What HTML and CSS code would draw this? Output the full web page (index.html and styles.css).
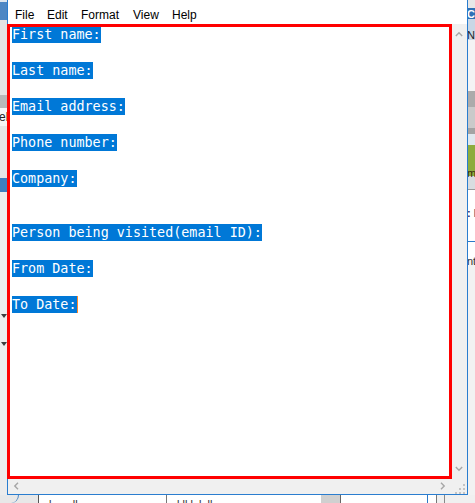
FILE: index.html
```
<!DOCTYPE html>
<html>
<head>
<meta charset="utf-8">
<link rel="stylesheet" href="styles.css">
</head>
<body>
<div class="desktop">
  <div class="strip-left">
    <div class="frag-el">el</div>
    <div class="tri tri-1"></div>
    <div class="tri tri-2"></div>
  </div>

  <div class="notepad">
    <div class="menubar">
      <span class="menu m-file">File</span>
      <span class="menu m-edit">Edit</span>
      <span class="menu m-format">Format</span>
      <span class="menu m-view">View</span>
      <span class="menu m-help">Help</span>
    </div>
    <div class="main">
      <div class="editor">
        <div class="line"><span class="sel">First name:</span></div>
        <div class="line"></div>
        <div class="line"><span class="sel">Last name:</span></div>
        <div class="line"></div>
        <div class="line"><span class="sel">Email address:</span></div>
        <div class="line"></div>
        <div class="line"><span class="sel">Phone number:</span></div>
        <div class="line"></div>
        <div class="line"><span class="sel">Company:</span></div>
        <div class="line"></div>
        <div class="line"></div>
        <div class="line"><span class="sel">Person being visited(email ID):</span></div>
        <div class="line"></div>
        <div class="line"><span class="sel">From Date:</span></div>
        <div class="line"></div>
        <div class="line"><span class="sel">To Date:</span><span class="caret"></span></div>
      </div>
      <div class="vscroll">
        <svg class="chev" width="8" height="6" viewBox="0 0 8 6"><polyline points="0.8,5 4,1.8 7.2,5" fill="none" stroke="#a6a6a6" stroke-width="1.4"/></svg>
        <svg class="chev" width="8" height="6" viewBox="0 0 8 6"><polyline points="0.8,1 4,4.2 7.2,1" fill="none" stroke="#a6a6a6" stroke-width="1.4"/></svg>
      </div>
    </div>
    <div class="hrow">
      <div class="hscroll">
        <svg class="chev" width="6" height="8" viewBox="0 0 6 8"><polyline points="5,0.8 1.8,4 5,7.2" fill="none" stroke="#a6a6a6" stroke-width="1.4"/></svg>
        <svg class="chev" width="6" height="8" viewBox="0 0 6 8"><polyline points="1,0.8 4.2,4 1,7.2" fill="none" stroke="#a6a6a6" stroke-width="1.4"/></svg>
      </div>
      <div class="corner">
        <svg width="10" height="10" viewBox="0 0 10 10" fill="#c4c4c4">
          <rect x="8" y="0" width="2" height="2"/>
          <rect x="4" y="4" width="2" height="2"/><rect x="8" y="4" width="2" height="2"/>
          <rect x="0" y="8" width="2" height="2"/><rect x="4" y="8" width="2" height="2"/><rect x="8" y="8" width="2" height="2"/>
        </svg>
      </div>
    </div>
    <div class="annot"></div>
  </div>

  <div class="strip-right">
    <div class="frag frag-cu">Cu</div>
    <div class="frag frag-n">N-</div>
    <div class="frag frag-m">m</div>
    <div class="frag frag-i">: I</div>
    <div class="frag frag-nt">nt</div>
  </div>

  <div class="strip-bottom">
    <div class="b-left"><div class="arc"></div></div>
    <div class="b-pane b-1"><span class="b-text">l&nbsp;&nbsp;&nbsp;&nbsp;&nbsp;&nbsp;&nbsp;ll</span></div>
    <div class="b-pane b-2"><span class="b-text">l ll l&nbsp;&nbsp;l&nbsp;&nbsp;ll</span></div>
    <div class="b-gray"></div>
    <div class="b-pane b-3"></div>
    <div class="b-end"></div>
  </div>
</div>
</body>
</html>
```

FILE: styles.css
```
html, body {
  margin: 0;
  padding: 0;
}
body {
  width: 475px;
  height: 503px;
  overflow: hidden;
  background: #ececec;
  font-family: "Liberation Sans", Arial, sans-serif;
}
.desktop {
  display: grid;
  grid-template-columns: 7px 461px 7px;
  grid-template-rows: 495px 8px;
  width: 475px;
  height: 503px;
}

/* ---------- background window, left ---------- */
.strip-left {
  display: flex;
  flex-direction: column;
  overflow: hidden;
  background: linear-gradient(to bottom,
    #dde5ee 0 2px, #4d87c4 2px 20px, #e4e4e4 20px 95px, #b8b8b8 95px 108px,
    #f6f6f6 108px 126px, #e6e6e6 126px 178px, #3f7fbf 178px 192px, #ececec 192px);
}
.frag-el {
  margin-top: 109px;
  margin-left: -1px;
  font-size: 12px;
  line-height: 16px;
  color: #222;
  white-space: nowrap;
}
.tri {
  width: 0;
  height: 0;
  margin-left: 1px;
  border-left: 3px solid transparent;
  border-right: 3px solid transparent;
  border-top: 4px solid #3c3c3c;
}
.tri-1 { margin-top: 189px; }
.tri-2 { margin-top: 24px; }

/* ---------- notepad window ---------- */
.notepad {
  position: relative;
  box-sizing: border-box;
  width: 461px;
  height: 495px;
  border: 1px solid #2a7dcf;
  border-top: none;
  display: flex;
  flex-direction: column;
  background: #fff;
}
.menubar {
  height: 24px;
  box-sizing: border-box;
  padding: 7px 0 0 7px;
  display: flex;
  background: #fff;
  font-size: 12px;
  line-height: 16px;
  color: #000;
}
.menu { display: block; white-space: nowrap; }
.m-file { width: 32px; }
.m-edit { width: 34px; }
.m-format { width: 52px; }
.m-view { width: 39px; }

.main {
  height: 454px;
  display: flex;
}
.editor {
  width: 442px;
  box-sizing: border-box;
  padding: 2px 0 0 4px;
  background: #fff;
  font-family: "DejaVu Sans Mono", "Liberation Mono", monospace;
  font-size: 13.4px;
  color: #000;
}
.line {
  height: 18px;
  white-space: pre;
  display: flex;
  align-items: flex-start;
}
.sel {
  display: inline-block;
  height: 17px;
  line-height: 17px;
  background: #0078d7;
  color: #fff;
}
.caret {
  display: inline-block;
  width: 1px;
  height: 17px;
  background: #ff8728;
}
.vscroll {
  width: 17px;
  box-sizing: border-box;
  background: #f0f0f0;
  display: flex;
  flex-direction: column;
  align-items: center;
  justify-content: space-between;
  padding: 7px 0 6px 0;
}
.chev { display: block; }
.hrow {
  height: 16px;
  display: flex;
}
.hscroll {
  width: 442px;
  box-sizing: border-box;
  background: #f0f0f0;
  display: flex;
  align-items: center;
  justify-content: space-between;
  padding: 0 4px 0 5px;
}
.corner {
  width: 17px;
  background: #f0f0f0;
  display: flex;
  align-items: flex-end;
  justify-content: flex-end;
  padding: 0 2px 0 0;
  box-sizing: border-box;
}
.annot {
  position: absolute;
  left: -1px;
  top: 24px;
  width: 445px;
  height: 455px;
  box-sizing: border-box;
  border: 3px solid #ff0000;
  pointer-events: none;
}

/* ---------- background window, right ---------- */
.strip-right {
  display: flex;
  flex-direction: column;
  overflow: hidden;
  font-size: 11px;
  line-height: 12px;
  background: linear-gradient(to bottom,
    #e8e8e8 0 8px, #2f70b6 8px 19px, #c9d7e6 19px 40px, #f4f4f4 40px 91px,
    #ababab 91px 107px, #cacaca 107px 128px, #a3a3a3 128px 134px, #dfe8ee 134px 145px,
    #8dac3e 145px 176px, #d8dde0 176px 189px, #9a9a9a 189px 190px, #ffffff 190px 241px,
    #2b79c8 241px 242px, #ffffff 242px 260px, #f2f2f2 260px);
}
.frag { white-space: nowrap; margin-left: -1px; }
.frag-cu { margin-top: 8px; color: #fff; font-weight: bold; }
.frag-n { margin-top: 9px; color: #222; }
.frag-m { margin-top: 126px; color: #3a2a10; }
.frag-i { margin-top: 28px; color: #1a2a6a; font-weight: bold; }
.frag-nt { margin-top: 36px; color: #333; }

/* ---------- background window, bottom ---------- */
.strip-bottom {
  grid-column: 1 / 4;
  display: flex;
  overflow: hidden;
  background: #f0f0f0;
}
.b-left {
  width: 38px;
  background: #e8e8e8;
  border-right: 1px solid #555;
  position: relative;
}
.arc {
  width: 8px;
  height: 12px;
  margin-left: 10px;
  margin-top: -4px;
  border-right: 1px solid #4a86c4;
  border-radius: 0 0 8px 0;
}
.b-pane {
  background: #fff;
  overflow: hidden;
  font-size: 11px;
  line-height: 12px;
  color: #333;
  white-space: nowrap;
}
.b-text { display: block; margin-top: 3px; padding-left: 10px; }
.b-1 { width: 127px; border-right: 1px solid #777; }
.b-2 { width: 154px; }
.b-gray { width: 19px; background: #d0d0d0; border-right: 1px solid #666; }
.b-3 { width: 86px; border-right: 1px solid #2b79c8; }
.b-end {
  flex: 1;
  background: linear-gradient(to right, #fff 0 8px, #777 8px 9px, #f0f0f0 9px 16px, #888 16px 17px, #f0f0f0 17px);
}
```
